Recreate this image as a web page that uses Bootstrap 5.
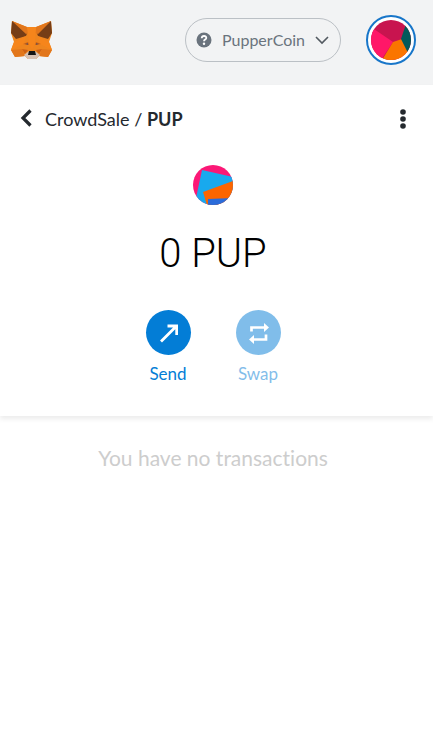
<!DOCTYPE html>
<html lang="en">
<head>
<meta charset="utf-8">
<meta name="viewport" content="width=device-width, initial-scale=1">
<title>PUP – MetaMask</title>
<link href="https://cdn.jsdelivr.net/npm/bootstrap@5.3.0/dist/css/bootstrap.min.css" rel="stylesheet">
<style>
body { font-family: Lato, "Open Sans", sans-serif; color: #24292e; background: #fff; font-variant-ligatures: none; }
svg { display: block; flex: none; }
.app-header { background: #f2f3f4; padding: 15px 17px 20px 11px; }
.plain-btn { background: none; border: 0; padding: 0; color: inherit; }
.network-btn { height: 44px; padding: 0 10px; border: 1px solid #bbc0c5; border-radius: 22px; color: #6a737d; font-size: 16px; margin-right: 25px; }
.network-name { margin: 0 9px 0 10px; }
.account-btn { width: 50px; height: 50px; border: 2px solid #1876c9; border-radius: 50%; background: #fff; }
.asset-nav { height: 67px; padding: 0 27px 0 20px; }
.crumbs { font-size: 18px; line-height: 24px; margin-left: 12px; }
.crumbs a { color: inherit; text-decoration: none; }
.asset-section { box-shadow: 0 3px 5px rgba(0, 0, 0, .08); }
.overview { padding: 13px 7px 32px 0; }
.balance { font-family: Roboto, sans-serif; font-size: 40px; line-height: 48px; font-weight: 300; color: #000; margin: 25px 0 32px; }
.actions { gap: 45px; }
.action-btn { width: 45px; color: #037dd6; font-size: 17px; line-height: 21px; gap: 8px; }
.action-btn:disabled { color: #037dd6; opacity: .5; }
.action-disc { width: 45px; height: 45px; background: #037dd6; }
.empty-note { font-size: 21px; line-height: 28px; color: #cdcdcd; padding: 28px 7px 0 0; }
</style>
<script src="https://cdn.jsdelivr.net/npm/bootstrap@5.3.0/dist/js/bootstrap.bundle.min.js" defer></script>
</head>
<body>
<header class="app-header d-flex align-items-center">
  <button class="plain-btn me-auto" type="button" aria-label="Home">
    <svg width="42" height="40" viewBox="0 0 42 40">
      <path fill="#ee851e" d="M1 1 16 7H25L40 1 41 13 38 22 41 30 37 37 28 36 25 39H17L14 36 4 37 0 30 3 22 0 13Z"/>
      <path fill="#763d16" d="M1 1 17 11 15 16 5 19 0 13ZM40 1 25 11 27 16 37 19 41 13Z"/>
      <path fill="#e2761b" d="M1 1 16 7 18 13 15 14ZM40 1 25 7 24 13 27 14ZM0 30 11 29 14 36 4 37ZM41 30 31 29 28 36 37 37Z"/>
      <path fill="#f6851b" d="M16 7H25L24 23 21 30 18 23ZM3 22 15 16 13 24 0 30ZM38 22 27 16 29 24 41 30Z"/>
      <path fill="#cd6116" d="m12 24 5-2 1 3ZM30 24 25 22 24 25ZM11 29 17 30 14 34ZM31 29 25 30 28 34Z"/>
      <path fill="#75534a" d="m14 24 3-1 0 2ZM28 24 25 23 25 25Z"/>
      <path fill="#d7c1b3" d="m13 35 5-4H24L29 35 25 39H17Z"/>
      <path fill="#161616" d="M18 31H24L25 35H17Z"/>
    </svg>
  </button>
  <button class="network-btn d-flex align-items-center bg-transparent" type="button">
    <svg width="16" height="16" viewBox="0 0 16 16"><circle cx="8" cy="8" r="7.5" fill="#6a737d"/><path d="M5.700 6.200C5.900 3.200 10.400 3.400 10.300 6 10.200 7.600 8 7.600 8 9.200" fill="none" stroke="#fff" stroke-width="1.8"/><circle cx="8" cy="11.7" r="1.2" fill="#fff"/></svg>
    <span class="network-name">PupperCoin</span>
    <svg width="16" height="10" viewBox="0 0 16 10"><path d="m2 2 6 6 6-6" fill="none" stroke="#535a61" stroke-width="1.6"/></svg>
  </button>
  <button class="account-btn d-flex align-items-center justify-content-center p-0" type="button" aria-label="My account">
    <svg width="40" height="40" viewBox="0 0 40 40">
      <clipPath id="accountClip"><circle cx="20" cy="20" r="20"/></clipPath>
      <g clip-path="url(#accountClip)"><path fill="#c8144f" d="M0 0H40V40H0Z"/><path fill="#ff1768" d="M0 7 22 22 10 40H0Z"/><path fill="#fa7500" d="M22 22 31 19 40 35V40H11Z"/><path fill="#03595b" d="M35 4 30 19 37 33 40 34V0Z"/></g>
    </svg>
  </button>
</header>
<main>
  <section class="asset-section">
    <nav class="asset-nav d-flex align-items-center" aria-label="Asset">
      <button class="plain-btn" type="button" aria-label="Back">
        <svg width="13" height="20" viewBox="0 0 13 20"><path d="M10.500 1.500 3 9l7.500 7.500" fill="none" stroke="#24292e" stroke-width="3.2"/></svg>
      </button>
      <div class="crumbs me-auto"><a href="#">CrowdSale</a> / <strong>PUP</strong></div>
      <button class="plain-btn" type="button" aria-label="Asset options">
        <svg width="6" height="20" viewBox="0 0 6 20" fill="#24292e"><circle cx="3" cy="3" r="2.800"/><circle cx="3" cy="10" r="2.800"/><circle cx="3" cy="17" r="2.800"/></svg>
      </button>
    </nav>
    <div class="overview d-flex flex-column align-items-center">
      <svg width="40" height="40" viewBox="0 0 40 40" role="img" aria-label="PUP token">
        <clipPath id="tokenClip"><circle cx="20" cy="20" r="20"/></clipPath>
        <g clip-path="url(#tokenClip)"><path fill="#fb1876" d="M0 0H40V40H0Z"/><path fill="#18a9ee" d="M9 5 40 12V40H4L3 33Z"/><path fill="#fc6500" d="M10 27 40 16V40H14Z"/><path fill="#2a6cda" d="M15 34 40 33V40H15Z"/></g>
      </svg>
      <h1 class="balance">0 PUP</h1>
      <div class="actions d-flex">
        <button class="plain-btn action-btn d-flex flex-column align-items-center" type="button">
          <span class="action-disc rounded-circle d-flex align-items-center justify-content-center">
            <svg width="20" height="20" viewBox="0 0 20 20"><path d="M3 18.500 18.500 3M9.500 3H18.700V12" fill="none" stroke="#fff" stroke-width="2.800"/></svg>
          </span>
          <span>Send</span>
        </button>
        <button class="plain-btn action-btn d-flex flex-column align-items-center" type="button" disabled>
          <span class="action-disc rounded-circle d-flex align-items-center justify-content-center">
            <svg width="22" height="22" viewBox="0 0 22 22"><path d="M4.500 9.500V5.500H17M19 12.500v5H6" fill="none" stroke="#fff" stroke-width="2.700"/><path d="M17 1 22 5.500 17 10ZM7 13 2 17.500 7 22Z" fill="#fff"/></svg>
          </span>
          <span>Swap</span>
        </button>
      </div>
    </div>
  </section>
  <p class="empty-note text-center mb-0">You have no transactions</p>
</main>
</body>
</html>
